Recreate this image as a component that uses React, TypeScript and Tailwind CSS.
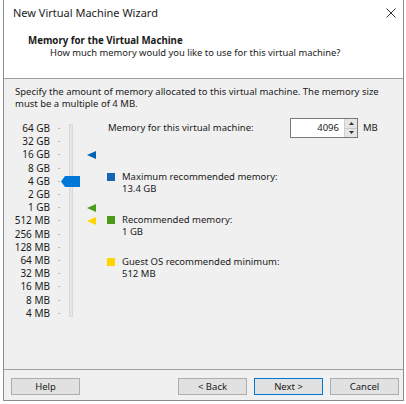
import React from "react";

const sizes = [
  "64 GB",
  "32 GB",
  "16 GB",
  "8 GB",
  "4 GB",
  "2 GB",
  "1 GB",
  "512 MB",
  "256 MB",
  "128 MB",
  "64 MB",
  "32 MB",
  "16 MB",
  "8 MB",
  "4 MB",
];

const ROW = 13.2;

// small left-pointing triangle used for the recommendation markers
const Marker = ({ color, index }: { color: string; index: number }) => (
  <svg
    className="absolute left-[83px]"
    style={{ top: index * ROW + ROW / 2 - 4 }}
    width="9"
    height="8"
    viewBox="0 0 9 8"
  >
    <path d="M0 4L9 0V8Z" fill={color} />
  </svg>
);

const Legend = ({
  color,
  label,
  value,
  className,
}: {
  color: string;
  label: string;
  value: string;
  className?: string;
}) => (
  <div className={`flex ${className ?? ""}`}>
    <div className={`mt-[2px] h-[8px] w-[8px] ${color}`} />
    <div className="ml-[7px] leading-[12px]">
      <div>{label}</div>
      <div>{value}</div>
    </div>
  </div>
);

const Button = ({ label, primary }: { label: string; primary?: boolean }) => (
  <button
    className={`h-[17px] w-[69px] border bg-[#e1e1e1] text-[9.5px] leading-none text-[#1a1a1a] ${
      primary ? "border-[#0078d7]" : "border-[#adadad]"
    }`}
  >
    {label}
  </button>
);

export default function App() {
  return (
    <div className="h-[404px] w-[406px] overflow-hidden bg-white font-['Noto_Sans',sans-serif] text-[#1a1a1a]">
      <div className="ml-[3px] flex h-[401px] w-[401px] flex-col border-b border-l border-r border-[#8c8c8c]">
        {/* Title bar */}
        <div className="flex h-[26px] shrink-0 items-center justify-between pl-[9px] pr-[5px]">
          <span className="text-[11px] text-[#222]">New Virtual Machine Wizard</span>
          <svg width="10" height="10" viewBox="0 0 10 10" className="mr-[2px]">
            <path d="M0.5 0.5L9.5 9.5M9.5 0.5L0.5 9.5" stroke="#333" strokeWidth="1" />
          </svg>
        </div>

        {/* Header */}
        <div className="h-[53px] shrink-0 border-b border-[#a0a0a0] bg-white pl-[24px] pt-[9px]">
          <div className="text-[9.7px] font-bold leading-[12px]">Memory for the Virtual Machine</div>
          <div className="pl-[22px] text-[9.4px] leading-[12px]">
            How much memory would you like to use for this virtual machine?
          </div>
        </div>

        {/* Body */}
        <div className="flex flex-1 flex-col bg-[#f0f0f0] text-[9.5px]">
          <p className="pl-[11px] pr-[6px] pt-[7px] leading-[12px]">
            Specify the amount of memory allocated to this virtual machine. The memory size
            must be a multiple of 4 MB.
          </p>

          <div className="mt-[8px] flex items-start">
            {/* Slider */}
            <div className="relative flex pt-[4px] text-[10px]">
              <div className="w-[46px] text-right">
                {sizes.map((s) => (
                  <div key={s} className="flex h-[13.2px] items-center justify-end">
                    {s}
                  </div>
                ))}
              </div>
              <div className="ml-[8px] w-[2px]">
                {sizes.map((s) => (
                  <div key={s} className="flex h-[13.2px] items-center">
                    <div className="h-px w-[2px] bg-[#b8b8b8]" />
                  </div>
                ))}
              </div>
              <div className="ml-[9px] mt-[2px] h-[193px] w-[4px] border border-[#d9d9d9] bg-[#e6e6e6]" />
              <div className="w-[30px]" />

              {/* Thumb at 4 GB */}
              <svg
                className="absolute left-[57px]"
                style={{ top: 4 + 4 * ROW + ROW / 2 - 5 }}
                width="19"
                height="11"
                viewBox="0 0 19 11"
              >
                <path d="M0 5.5L4 0H19V11H4Z" fill="#0078d7" />
              </svg>

              <div className="absolute left-0 top-[4px]">
                <Marker color="#0063b1" index={2} />
                <Marker color="#4c9c1b" index={6} />
                <Marker color="#ffd400" index={7} />
              </div>
            </div>

            {/* Right column */}
            <div className="ml-[4px] flex-1">
              <div className="flex h-[20px] items-center">
                <span className="w-[183px] pl-[1px]">Memory for this virtual machine:</span>
                <div className="flex h-[20px] border border-[#7a7a7a] bg-white">
                  <div className="flex w-[53px] items-center justify-end pr-[5px]">4096</div>
                  <div className="flex w-[13px] flex-col border-l border-[#d0d0d0]">
                    <div className="flex flex-1 items-center justify-center border-b border-[#c8c8c8] bg-[#e5e5e5]">
                      <svg width="5" height="3" viewBox="0 0 5 3">
                        <path d="M0 3L2.5 0L5 3Z" fill="#333" />
                      </svg>
                    </div>
                    <div className="flex flex-1 items-center justify-center bg-[#e5e5e5]">
                      <svg width="5" height="3" viewBox="0 0 5 3">
                        <path d="M0 0L5 0L2.5 3Z" fill="#333" />
                      </svg>
                    </div>
                  </div>
                </div>
                <span className="ml-[5px]">MB</span>
              </div>

              <Legend
                className="mt-[33px]"
                color="bg-[#1565b5]"
                label="Maximum recommended memory:"
                value="13.4 GB"
              />
              <Legend
                className="mt-[19px]"
                color="bg-[#4a9a17]"
                label="Recommended memory:"
                value="1 GB"
              />
              <Legend
                className="mt-[18px]"
                color="bg-[#ffd400]"
                label="Guest OS recommended minimum:"
                value="512 MB"
              />
            </div>
          </div>
        </div>

        {/* Footer */}
        <div className="flex h-[31px] shrink-0 items-start border-t border-[#a0a0a0] bg-[#f0f0f0] pl-[7px] pr-[4px] pt-[8px]">
          <Button label="Help" />
          <div className="flex-1" />
          <div className="flex gap-[7px]">
            <Button label="< Back" />
            <Button label="Next >" primary />
            <Button label="Cancel" />
          </div>
        </div>
      </div>
    </div>
  );
}
